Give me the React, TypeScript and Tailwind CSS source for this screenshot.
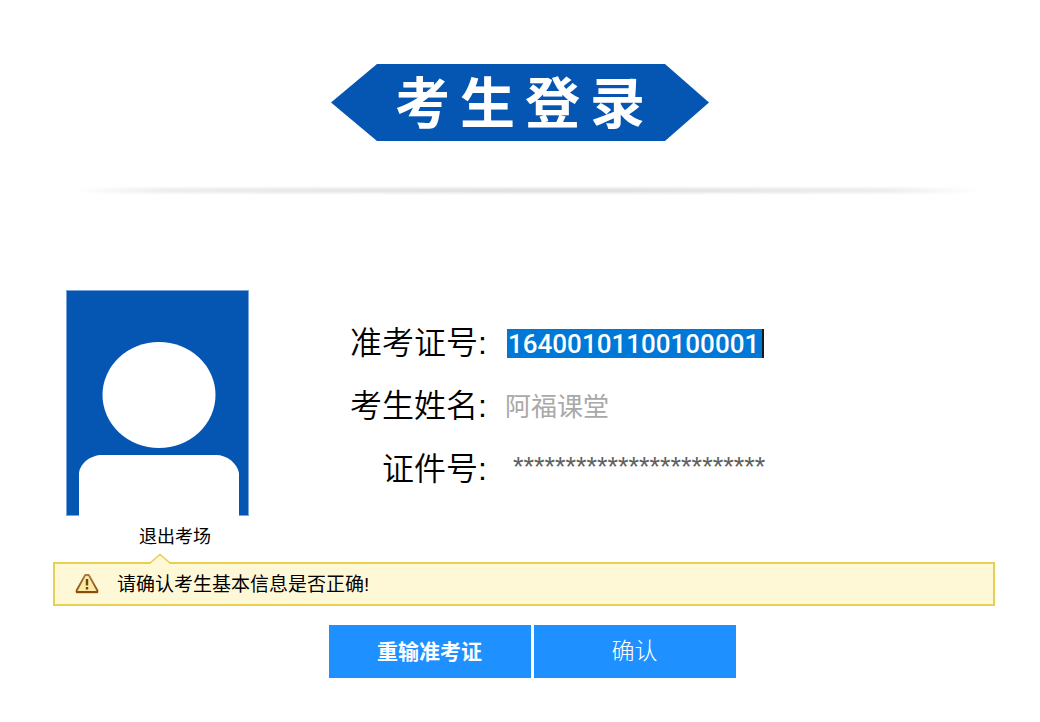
import { useState } from "react";

const rows = [
  { id: "ticket", label: "准考证号:" },
  { id: "name", label: "考生姓名:" },
  { id: "card", label: "证件号:" },
];

const inputStyles: Record<string, string> = {
  ticket:
    "ml-5 h-[29px] w-[257px] border-r-2 border-[#1a1a1a] bg-[#0078d7] pl-px pt-px font-['Roboto',sans-serif] text-[26px] font-medium leading-7 text-white",
  name: "ml-[18px] h-10 w-64 text-[26px] leading-10 text-[#a9a9a9]",
  card: "ml-[26px] h-10 w-72 pb-1 text-[27px] leading-9 text-[#606060]",
};

const Avatar = () => (
  <svg className="h-[226px] w-[183px]" viewBox="0 0 183 226" role="img" aria-label="考生照片">
    <rect x="0.5" y="0.5" width="182" height="225" fill="#0556b3" stroke="#7aa5d8" />
    <ellipse cx="93" cy="105" rx="56.5" ry="53" fill="#fff" />
    <path d="M13 226V183C14 173 25 165 36 165H150C161 165 171 173 173 183V226Z" fill="#fff" />
  </svg>
);

const WarningIcon = () => (
  <svg className="h-5 w-6 shrink-0" viewBox="0 0 24 20">
    <defs>
      <linearGradient id="warn" x1="0" y1="0" x2="0" y2="1">
        <stop offset="0" stopColor="#a87c48" />
        <stop offset="1" stopColor="#84500f" />
      </linearGradient>
    </defs>
    <path
      d="M10.2 1H13.8L22.4 16.5V18H1.6V16.5Z"
      fill="#fde9a4"
      stroke="url(#warn)"
      strokeWidth="1.8"
      strokeLinejoin="round"
    />
    <path d="M1.4 18.2H22.6" stroke="#84500f" strokeWidth="2" />
    <path d="M12 5V11.5M12 13V15.5" stroke="#6b451b" strokeWidth="2.4" />
  </svg>
);

const App = () => {
  const [values, setValues] = useState<Record<string, string>>({
    ticket: "16400101100100001",
    name: "阿福课堂",
    card: "************************",
  });

  return (
    <div className="min-h-screen w-full bg-white pt-16 pb-11 font-['Liberation_Sans','Noto_Sans_CJK_SC',sans-serif] text-black">
      {/* Header */}
      <header>
        <h1 className="mx-auto flex h-[77px] w-[378px] items-center justify-center gap-[10px] bg-[#0556b3] pt-1 text-[55px] font-bold leading-none text-white [clip-path:polygon(0_50%,46px_0,calc(100%-44px)_0,100%_50%,calc(100%-44px)_100%,46px_100%)]">
          {["考", "生", "登", "录"].map((char) => (
            <span key={char}>{char}</span>
          ))}
        </h1>
        <div className="mt-[45px] ml-[74px] mr-[60px] h-[9px] bg-[linear-gradient(#ffffff,#e2e2e2_40%,#e2e2e2_60%,#ffffff)] [mask-image:linear-gradient(90deg,transparent,rgba(0,0,0,0.6)_10%,#000_45%,#000_60%,rgba(0,0,0,0.6)_90%,transparent)]" />
      </header>

      <main className="mt-[95px] pl-[53px] pr-[45px]">
        {/* Candidate info */}
        <section className="flex pl-[13px]">
          <Avatar />
          <div className="ml-[101px] flex flex-col pt-[22px]">
            {rows.map(({ id, label }) => (
              <div key={id} className="flex h-[63px] items-center">
                <label htmlFor={id} className="w-[137px] whitespace-nowrap pb-px text-right text-[32px] font-[350] leading-10">
                  {label}
                </label>
                <input
                  id={id}
                  value={values[id]}
                  onChange={(e) => setValues({ ...values, [id]: e.target.value })}
                  className={`outline-none ${inputStyles[id]}`}
                />
              </div>
            ))}
          </div>
        </section>

        <button type="button" className="ml-[86px] mt-[9px] block text-[18px] leading-6">
          退出考场
        </button>

        {/* Notice */}
        <div className="relative mt-[13px] flex h-11 items-center border-2 border-[#e8d052] bg-[#fff8d7] pl-5">
          <svg className="absolute -top-[11px] left-[94px] h-[11px] w-[22px]" viewBox="0 0 22 11">
            <path d="M1 11L11 1.5L21 11Z" fill="#fff8d7" />
            <path d="M1 10L11 1.5L21 10" fill="none" stroke="#e8d052" strokeWidth="1.6" />
          </svg>
          <WarningIcon />
          <p className="ml-[18px] pt-[2px] text-[19px] leading-6">请确认考生基本信息是否正确!</p>
        </div>

        {/* Actions */}
        <div className="mt-[19px] flex justify-center gap-[3px] pl-4">
          <button type="button" className="h-[53px] w-[202px] bg-[#1e90ff] text-[21px] font-bold text-white">
            重输准考证
          </button>
          <button type="button" className="h-[53px] w-[202px] bg-[#1e90ff] text-[23px] font-light text-white">
            确认
          </button>
        </div>
      </main>
    </div>
  );
};

export default App;
